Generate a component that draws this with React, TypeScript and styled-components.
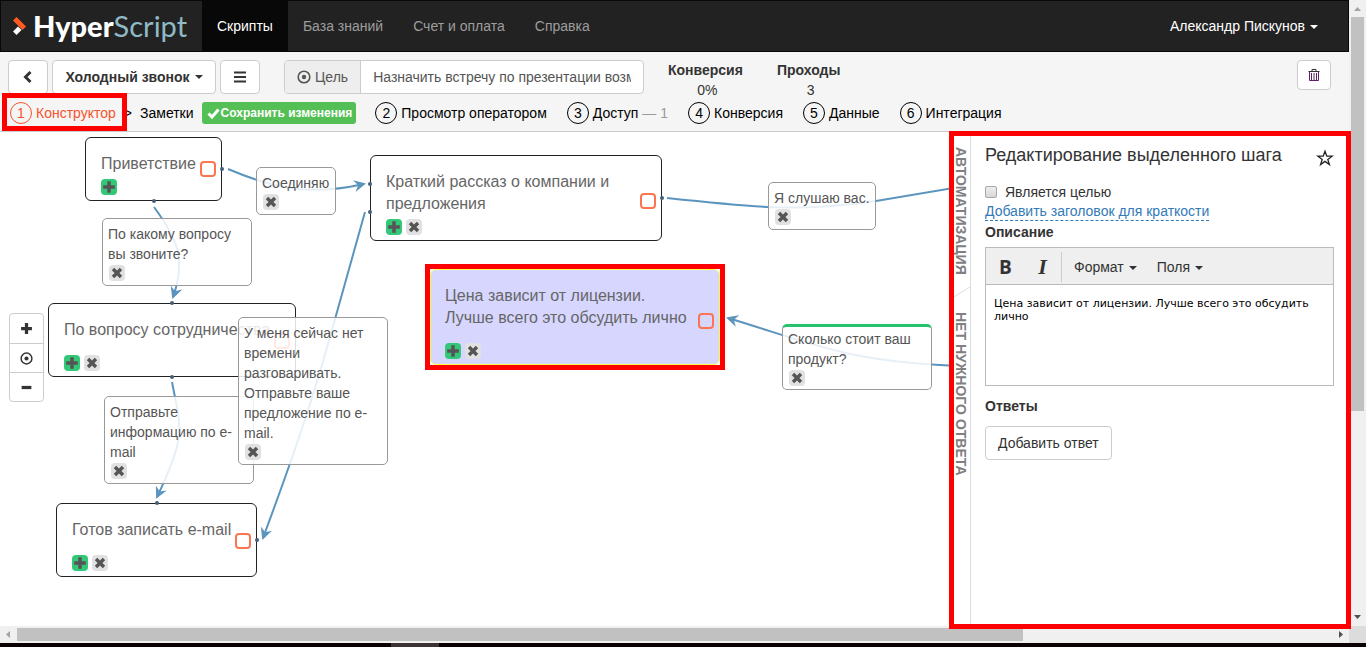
import React from 'react';
import styled, { createGlobalStyle, css } from 'styled-components';

const sans = '"Liberation Sans", Arial, sans-serif';
const red = '#ff0000';

const Global = createGlobalStyle`
  *, *::before, *::after { box-sizing: border-box; }
  html, body { margin: 0; padding: 0; }
  body { font: 14px/20px ${sans}; color: #333; background: #fff; overflow: hidden; }
  button, input, textarea { font: inherit; color: inherit; margin: 0; }
  a { color: inherit; text-decoration: none; }
  h1, h2, h3, p { margin: 0; }
`;

/* ---------- window ---------- */
const Window = styled.div`
  display: grid;
  grid-template-columns: minmax(0, 1fr) 17px;
  grid-template-rows: minmax(0, 1fr) 17px 4px;
  height: 100vh;
`;
const Page = styled.div`
  display: flex;
  flex-direction: column;
  min-width: 0;
  min-height: 0;
`;
const ScrollTrack = styled.div<{ $vertical?: boolean }>`
  display: flex;
  flex-direction: ${p => (p.$vertical ? 'column' : 'row')};
  background: #f0f0f0;
  padding: ${p => (p.$vertical ? '0 2px' : '2px 0')};
`;
const ScrollArrow = styled.svg`
  flex: none;
  width: 17px;
  height: 17px;
  margin: -2px 0;
  fill: #a3a3a3;
  &.end { fill: #505050; margin-left: auto; }
`;
const ScrollArrowV = styled(ScrollArrow)`
  margin: 0 -2px;
  &.end { fill: #505050; margin: auto -2px 0; }
`;
const ScrollThumb = styled.div<{ $share: string }>`
  flex: 0 0 ${p => p.$share};
  background: #c1c1c1;
`;
const Corner = styled.div`
  background: #dcdcdc;
`;
const BottomEdge = styled.div`
  grid-column: 1 / -1;
  display: flex;
  background: #0a0203;
  &::before {
    content: '';
    width: 48px;
    margin-left: 391px;
    background: #3b3435;
  }
`;

/* ---------- top bar ---------- */
const TopBar = styled.header`
  display: flex;
  flex: none;
  height: 52px;
  background: #222;
  border: 1px solid #080808;
`;
const Brand = styled.a`
  display: flex;
  align-items: center;
  gap: 7px;
  width: 201px;
  padding-left: 12px;
  font: 900 29px/50px Lato, sans-serif;
  color: #fff;
  svg { width: 13px; height: 18px; }
  span { font-weight: 400; color: #8fbac6; }
`;
const NavLink = styled.a<{ $active?: boolean }>`
  padding: 0 15px;
  line-height: 50px;
  color: ${p => (p.$active ? '#fff' : '#9d9d9d')};
  background: ${p => (p.$active ? '#080808' : 'none')};
`;
const UserMenu = styled.button`
  margin-left: auto;
  padding: 0 30px 0 15px;
  border: 0;
  background: none;
  color: #fff;
`;
const Caret = styled.span`
  display: inline-block;
  margin-left: 5px;
  vertical-align: middle;
  border: 4px solid transparent;
  border-top-color: currentColor;
  border-bottom: 0;
`;

/* ---------- toolbar ---------- */
const Toolbar = styled.section`
  flex: none;
  background: #f5f5f5;
  border-bottom: 1px solid #ccc;
`;
const ToolRow = styled.div`
  display: flex;
  align-items: flex-start;
  gap: 4px;
  height: 50px;
  padding: 8px 18px 0 8px;
`;
const Button = styled.button<{ $bold?: boolean; $small?: boolean }>`
  display: inline-flex;
  align-items: center;
  justify-content: center;
  height: ${p => (p.$small ? '30px' : '34px')};
  padding: 0 ${p => (p.$small ? '10px' : '12px')};
  border: 1px solid #ccc;
  border-radius: 4px;
  background: #fff;
  font-weight: ${p => (p.$bold ? 700 : 400)};
  white-space: nowrap;
  svg { width: 14px; height: 14px; }
`;
const ScriptButton = styled(Button)`
  min-width: 164px;
`;
const TrashButton = styled(Button)`
  margin-left: auto;
  width: 34px;
  svg { flex: none; }
`;
const GoalGroup = styled.div`
  display: flex;
  width: 360px;
  height: 34px;
  margin-left: 20px;
  border: 1px solid #ccc;
  border-radius: 4px;
  background: #fff;
  overflow: hidden;
`;
const GoalLabel = styled.label`
  display: flex;
  align-items: center;
  gap: 4px;
  flex: none;
  padding: 0 12px;
  background: #eee;
  border-right: 1px solid #ccc;
  color: #555;
  svg { width: 14px; height: 14px; }
`;
const GoalInput = styled.input`
  flex: 1;
  min-width: 0;
  padding: 0;
  margin: 0 12px;
  border: 0;
  outline: 0;
  color: #555;
  background: none;
`;
const Stats = styled.dl`
  display: flex;
  gap: 34px;
  margin: 0 0 0 20px;
  div { text-align: center; }
  dt { font-weight: 700; }
  dd { margin: 0; padding-left: 4px; }
`;
const StepRow = styled.nav`
  display: flex;
  align-items: center;
  height: 29px;
  padding: 0 10px 7px;
  color: #000;
`;
const Step = styled.a<{ $active?: boolean }>`
  position: relative;
  display: flex;
  align-items: center;
  gap: 4px;
  margin-right: 20px;
  white-space: nowrap;
  i {
    width: 22px;
    height: 22px;
    border: 1px solid currentColor;
    border-radius: 50%;
    font-style: normal;
    text-align: center;
  }
  small { font-size: 14px; color: #999; }
  ${p => p.$active && css`
    color: #f6532b;
    margin-right: 8px;
    &::after {
      content: '';
      position: absolute;
      inset: -9px -11px -7px -8px;
      border: 5px solid ${red};
      z-index: 5;
    }
  `}
`;
const Notes = styled.a`
  margin: 0 8px;
`;
const SaveButton = styled.button`
  display: flex;
  align-items: center;
  gap: 1px;
  height: 22px;
  margin-right: 19px;
  padding: 0 4px 0 5px;
  border: 0;
  border-radius: 3px;
  background: #53bf55;
  color: #fff;
  font-size: 12px;
  font-weight: 700;
  white-space: nowrap;
  svg { width: 13px; height: 13px; }
`;

/* ---------- workspace ---------- */
const Workspace = styled.main`
  display: flex;
  flex: 1;
  min-height: 0;
`;
const Canvas = styled.section`
  position: relative;
  flex: 1;
  min-width: 0;
  overflow: hidden;
`;
const Wires = styled.svg`
  position: absolute;
  inset: 0;
  width: 100%;
  height: 100%;
  overflow: hidden;
  fill: none;
  stroke: #5b95be;
  stroke-width: 2;
`;
const Ports = styled(Wires)`
  fill: #456078;
  stroke: none;
  pointer-events: none;
`;
const NodeBox = styled.article<{ $x: number; $y: number; $w: number; $h: number; $selected?: boolean }>`
  position: absolute;
  left: ${p => p.$x}px;
  top: ${p => p.$y}px;
  width: ${p => p.$w}px;
  height: ${p => p.$h}px;
  display: flex;
  flex-direction: column;
  justify-content: space-between;
  padding: 15px 14px 5px 15px;
  border: 1px solid #222;
  border-radius: 6px;
  background: #fff;
  color: #666;
  font-size: 16px;
  line-height: 22px;
  white-space: pre;
  ${p => p.$selected && css`
    border-color: #ffff4d;
    background: #d6d6ff;
    padding-left: 14px;
    &::after {
      content: '';
      position: absolute;
      inset: -6px;
      border: 5px solid ${red};
      pointer-events: none;
    }
  `}
`;
const Goal = styled.button<{ $top: number }>`
  position: absolute;
  top: ${p => p.$top - 1}px;
  right: 5px;
  width: 16px;
  height: 16px;
  padding: 0;
  border: 2px solid #fb7650;
  border-radius: 4px;
  background: none;
`;
const Actions = styled.div`
  display: flex;
  gap: 4px;
`;
const Tiny = styled.button<{ $add?: boolean }>`
  display: flex;
  align-items: center;
  justify-content: center;
  width: 16px;
  height: 16px;
  padding: 0;
  border: 0;
  border-radius: 4px;
  background: ${p => (p.$add ? '#32c878' : '#e1e1e1')};
  color: #555;
  svg { width: ${p => (p.$add ? 14 : 12)}px; height: ${p => (p.$add ? 14 : 12)}px; }
`;
const LinkBox = styled.article<{ $x: number; $y: number; $w: number; $hit?: boolean }>`
  position: absolute;
  left: ${p => p.$x}px;
  top: ${p => p.$y}px;
  width: ${p => p.$w}px;
  padding: 5px 5px 4px;
  border: 1px solid #999;
  border-radius: 5px;
  background: rgba(255, 255, 255, 0.85);
  color: #555;
  white-space: pre;
  ${Tiny} { margin: 1px 0 0 1px; }
  ${p => p.$hit && css`
    padding: 2px 5px 3px;
    border-top: 3px solid #26c26d;
  `}
`;
const ZoomTools = styled.div`
  position: absolute;
  left: 9px;
  top: 181px;
  display: flex;
  flex-direction: column;
  width: 35px;
  border: 1px solid #ccc;
  border-radius: 4px;
  background: #fff;
  button {
    display: flex;
    align-items: center;
    justify-content: center;
    height: 29px;
    padding: 0;
    border: 0;
    background: none;
  }
  button + button { border-top: 1px solid #ccc; }
  svg { width: 13px; height: 13px; }
`;

/* ---------- side panel ---------- */
const Panel = styled.aside`
  position: relative;
  display: flex;
  flex: none;
  width: 400px;
  background: #fff;
  &::after {
    content: '';
    position: absolute;
    inset: -1px -2px -3px 0;
    border: 5px solid ${red};
    pointer-events: none;
    z-index: 3;
  }
`;
const SideTabs = styled.div`
  display: flex;
  flex-direction: column;
  width: 22px;
  padding: 15px 0 0 3px;
  border-right: 1px solid #ddd;
`;
const SideTab = styled.button`
  padding: 0;
  border: 0;
  background: none;
  color: #808080;
  font-weight: 700;
  line-height: 18px;
  writing-mode: vertical-rl;
  text-align: left;
  white-space: nowrap;
`;
const TabEdge = styled.svg`
  width: 18px;
  height: 14px;
  margin: 11px 0 12px;
  flex: none;
  stroke: #ddd;
  fill: none;
`;
const PanelBody = styled.div`
  flex: 1;
  min-width: 0;
  padding: 11px 15px 0 14px;
`;
const PanelHead = styled.div`
  display: flex;
  justify-content: space-between;
  margin-bottom: 13px;
  h2 { font-size: 18px; font-weight: 400; line-height: 24px; }
  button { padding: 0; border: 0; background: none; height: 26px; }
  svg { display: block; width: 18px; height: 18px; margin-top: 4px; }
`;
const CheckLine = styled.label`
  display: flex;
  align-items: center;
  gap: 8px;
  input {
    appearance: none;
    width: 12px;
    height: 12px;
    border: 1px solid #a8a8a8;
    border-radius: 2px;
    background: linear-gradient(#eee, #d8d8d8);
  }
`;
const AddTitle = styled.a`
  display: block;
  width: fit-content;
  line-height: 17px;
  margin-bottom: 1px;
  padding-top: 1px;
  color: #337ab7;
  border-bottom: 1px dashed #337ab7;
`;
const FieldLabel = styled.label`
  display: block;
  font-weight: 700;
`;
const AnswersTitle = styled.h3`
  font-size: 14px;
  font-weight: 700;
`;
const Editor = styled.div`
  margin: 5px 0 10px;
  border: 1px solid #bbb;
`;
const EditorBar = styled.div`
  display: flex;
  align-items: center;
  height: 37px;
  padding: 1px 0 0 1px;
  background: #efefef;
  border-bottom: 1px solid #bbb;
`;
const EditorMenu = styled.button`
  height: 30px;
  padding: 0 8px 0 12px;
  border: 0;
  background: none;
`;
const Mark = styled.button<{ $italic?: boolean }>`
  width: 37px;
  height: 30px;
  padding: 0;
  border: 0;
  background: none;
  font-family: ${p => (p.$italic ? '"Liberation Serif", serif' : '"Open Sans", sans-serif')};
  font-size: ${p => (p.$italic ? '22px' : '19px')};
  font-weight: 700;
  font-style: ${p => (p.$italic ? 'italic' : 'normal')};
`;
const Divider = styled.span`
  width: 1px;
  height: 30px;
  background: #ccc;
`;
const EditorText = styled.textarea`
  display: block;
  width: 100%;
  height: 100px;
  padding: 12px 8px;
  border: 0;
  outline: 0;
  resize: none;
  background: #fff;
  color: #000;
  font: 11px/13px "DejaVu Sans", Verdana, sans-serif;
`;
const AddAnswer = styled(Button)`
  margin-top: 10px;
`;

/* ---------- icons ---------- */
const Target = () => (
  <svg viewBox="0 0 14 14" fill="none" stroke="currentColor" strokeWidth="1.6">
    <circle cx="7" cy="7" r="5.8" />
    <circle cx="7" cy="7" r="2.2" fill="currentColor" stroke="none" />
  </svg>
);
const Plus = () => (
  <svg viewBox="0 0 12 12" fill="currentColor"><path d="M4.5 1h3v3.5H11v3H7.5V11h-3V7.500H1v-3h3.500z" /></svg>
);
const Minus = () => (
  <svg viewBox="0 0 12 12" fill="currentColor"><path d="M1.500 4.500h9v3h-9z" /></svg>
);
const Cross = () => (
  <svg viewBox="0 0 12 12" fill="currentColor">
    <path d="M3.200 .8 6 3.600 8.800 .8 11.200 3.200 8.400 6l2.800 2.800-2.400 2.400L6 8.400l-2.800 2.800L.8 8.800 3.600 6 .8 3.200z" />
  </svg>
);
const Trash = () => (
  <svg viewBox="0 0 14 14" fill="none" stroke="#5f2167">
    <path d="M1.500 3.500h11M5 3V1.500h4V3" stroke="#333" />
    <path d="M2.500 4v8.500h9V4M4.500 5v7M9.500 5v7M7 5v7" />
  </svg>
);

/* ---------- diagram data ---------- */
const nodes = [
  { x: 85, y: 5, w: 137, h: 64, goal: 24, text: 'Приветствие', first: true },
  { x: 48, y: 171, w: 248, h: 74, goal: 30, text: 'По вопросу сотрудничества' },
  { x: 56, y: 371, w: 201, h: 74, goal: 30, text: 'Готов записать e-mail' },
  { x: 370, y: 23, w: 292, h: 86, goal: 38, text: 'Краткий рассказ о компании и\nпредложения' },
  { x: 430, y: 137, w: 290, h: 96, goal: 44, text: 'Цена зависит от лицензии.\nЛучше всего это обсудить лично', selected: true },
];
const links = [
  { x: 256, y: 35, w: 80, text: 'Соединяю' },
  { x: 102, y: 86, w: 150, text: 'По какому вопросу\nвы звоните?' },
  { x: 104, y: 264, w: 150, text: 'Отправьте\nинформацию по e-\nmail' },
  { x: 238, y: 185, w: 150, text: 'У меня сейчас нет\nвремени\nразговаривать.\nОтправьте ваше\nпредложение по e-\nmail.' },
  { x: 768, y: 50, w: 108, text: 'Я слушаю вас.' },
  { x: 782, y: 192, w: 150, text: 'Сколько стоит ваш\nпродукт?', hit: true },
];
const wires = [
  'M228 37C275 57 310 64 364 52',
  'M154 75C176 105 187 126 173 165',
  'M172 250C181 297 187 302 157 365',
  'M365 80L330 205C312 270 293 325 263 406',
  'M667 66C760 76 800 80 876 69L960 55',
  'M960 234C850 230 820 214 728 186',
];
const ports = [[222, 37], [154, 69], [370, 52], [370, 80], [662, 66], [172, 171], [172, 245], [157, 371], [257, 408]];
const steps = [
  { n: 2, text: 'Просмотр оператором' },
  { n: 3, text: 'Доступ', note: '— 1' },
  { n: 4, text: 'Конверсия' },
  { n: 5, text: 'Данные' },
  { n: 6, text: 'Интеграция' },
];

export default function App() {
  return (
    <Window>
      <Global />
      <Page>
        <TopBar>
          <Brand href="#">
            <svg viewBox="0 0 13 18">
              <path d="M0 3.500 3.500 0 13 9.500 9.500 13z" fill="#ff5a1f" />
              <path d="M0 14.500 5 9.500 8.500 13 3.500 18z" fill="#fff" />
            </svg>
            <div>Hyper<span>Script</span></div>
          </Brand>
          <NavLink href="#" $active>Скрипты</NavLink>
          <NavLink href="#">База знаний</NavLink>
          <NavLink href="#">Счет и оплата</NavLink>
          <NavLink href="#">Справка</NavLink>
          <UserMenu>Александр Пискунов<Caret /></UserMenu>
        </TopBar>

        <Toolbar>
          <ToolRow>
            <Button aria-label="Назад">
              <svg viewBox="0 0 14 14"><path d="M9.500 2 4.500 7l5 5" fill="none" stroke="#333" strokeWidth="3" /></svg>
            </Button>
            <ScriptButton $bold>Холодный звонок<Caret /></ScriptButton>
            <Button aria-label="Меню">
              <svg viewBox="0 0 14 14"><path d="M1 2.500h12M1 7h12M1 11.500h12" stroke="#333" strokeWidth="2" /></svg>
            </Button>
            <GoalGroup>
              <GoalLabel htmlFor="goal"><Target />Цель</GoalLabel>
              <GoalInput id="goal" defaultValue="Назначить встречу по презентации возможностей" />
            </GoalGroup>
            <Stats>
              <div><dt>Конверсия</dt><dd>0%</dd></div>
              <div><dt>Проходы</dt><dd>3</dd></div>
            </Stats>
            <TrashButton $small aria-label="Удалить"><Trash /></TrashButton>
          </ToolRow>
          <StepRow>
            <Step href="#" $active><i>1</i>Конструктор</Step>
            &gt;
            <Notes href="#">Заметки</Notes>
            <SaveButton>
              <svg viewBox="0 0 13 13"><path d="M1.500 6.500 5 10l6.500-7.500" fill="none" stroke="#fff" strokeWidth="3" /></svg>
              Сохранить изменения
            </SaveButton>
            {steps.map(s => (
              <Step href="#" key={s.n}><i>{s.n}</i>{s.text}{s.note && <small>{s.note}</small>}</Step>
            ))}
          </StepRow>
        </Toolbar>

        <Workspace>
          <Canvas>
            {nodes.map(n => (
              <NodeBox key={n.text} $x={n.x} $y={n.y} $w={n.w} $h={n.h} $selected={n.selected}>
                <p>{n.text}</p>
                <Actions>
                  <Tiny $add aria-label="Добавить"><Plus /></Tiny>
                  {!n.first && <Tiny aria-label="Удалить"><Cross /></Tiny>}
                </Actions>
                <Goal $top={n.goal} aria-label="Цель" />
              </NodeBox>
            ))}
            <Wires aria-hidden="true">
              <defs>
                <marker id="arrow" markerUnits="userSpaceOnUse" markerWidth="14" markerHeight="12" refX="10" refY="6" orient="auto">
                  <path d="M0 0 12 6 0 12 4 6z" fill="#5b95be" stroke="none" />
                </marker>
              </defs>
              {wires.map((d, i) => (
                <path key={d} d={d} markerEnd={i === 4 ? undefined : 'url(#arrow)'} />
              ))}
            </Wires>
            <Ports aria-hidden="true">
              {ports.map(([x, y]) => <circle key={`${x}-${y}`} cx={x} cy={y} r="2" />)}
            </Ports>
            {links.map(l => (
              <LinkBox key={l.text} $x={l.x} $y={l.y} $w={l.w} $hit={l.hit}>
                <p>{l.text}</p>
                <Tiny aria-label="Удалить"><Cross /></Tiny>
              </LinkBox>
            ))}
            <ZoomTools>
              <button aria-label="Увеличить"><Plus /></button>
              <button aria-label="По центру"><Target /></button>
              <button aria-label="Уменьшить"><Minus /></button>
            </ZoomTools>
          </Canvas>

          <Panel>
            <SideTabs>
              <SideTab>АВТОМАТИЗАЦИЯ</SideTab>
              <TabEdge viewBox="0 0 18 14"><path d="M0 12 18 1" /></TabEdge>
              <SideTab>НЕТ НУЖНОГО ОТВЕТА</SideTab>
            </SideTabs>
            <PanelBody>
              <PanelHead>
                <h2>Редактирование выделенного шага</h2>
                <button aria-label="В избранное">
                  <svg viewBox="0 0 18 18" fill="none" stroke="#222" strokeWidth="1.300">
                    <path d="M9 2.200 10.800 7.200h5.300l-4.300 3.200 1.600 5.100L9 12.400l-4.400 3.100 1.600-5.100L1.900 7.200h5.300z" />
                  </svg>
                </button>
              </PanelHead>
              <CheckLine><input type="checkbox" />Является целью</CheckLine>
              <AddTitle href="#">Добавить заголовок для краткости</AddTitle>
              <FieldLabel htmlFor="description">Описание</FieldLabel>
              <Editor>
                <EditorBar>
                  <Mark aria-label="Полужирный">B</Mark>
                  <Mark $italic aria-label="Курсив">I</Mark>
                  <Divider />
                  <EditorMenu>Формат<Caret /></EditorMenu>
                  <EditorMenu>Поля<Caret /></EditorMenu>
                </EditorBar>
                <EditorText id="description" defaultValue="Цена зависит от лицензии. Лучше всего это обсудить лично" />
              </Editor>
              <AnswersTitle>Ответы</AnswersTitle>
              <AddAnswer>Добавить ответ</AddAnswer>
            </PanelBody>
          </Panel>
        </Workspace>
      </Page>

      <ScrollTrack $vertical>
        <ScrollArrowV viewBox="0 0 17 17"><path d="M5 11h7L8.500 7z" /></ScrollArrowV>
        <ScrollThumb $share="63%" />
        <ScrollArrowV className="end" viewBox="0 0 17 17"><path d="M5 6h7L8.500 10z" /></ScrollArrowV>
      </ScrollTrack>
      <ScrollTrack>
        <ScrollArrow viewBox="0 0 17 17"><path d="M10 5v7L6 8.500z" /></ScrollArrow>
        <ScrollThumb $share="74.6%" />
        <ScrollArrow className="end" viewBox="0 0 17 17"><path d="M7 5v7l4-3.500z" /></ScrollArrow>
      </ScrollTrack>
      <Corner />
      <BottomEdge />
    </Window>
  );
}
